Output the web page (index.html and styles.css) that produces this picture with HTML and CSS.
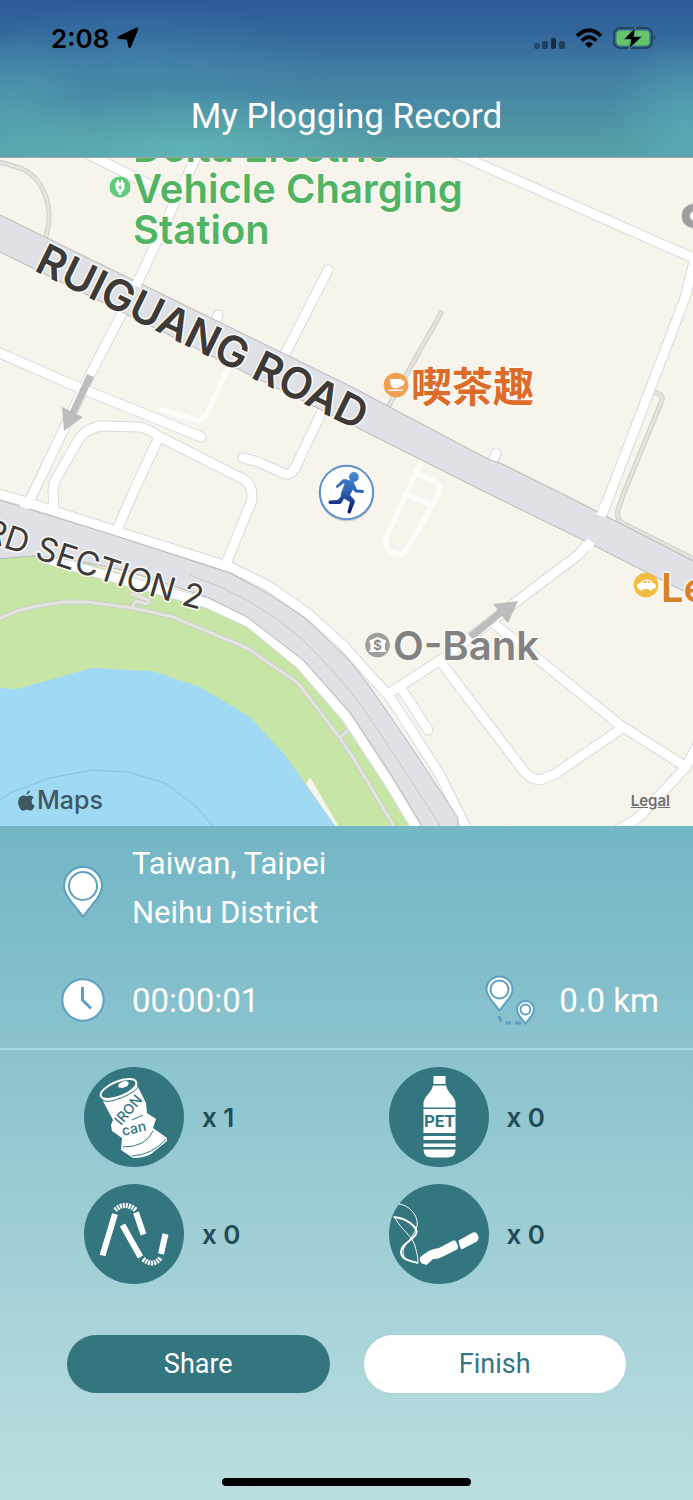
FILE: index.html
```html
<!DOCTYPE html>
<html lang="en">
<head>
  <meta charset="UTF-8">
  <meta name="viewport" content="width=device-width, initial-scale=1.0">
  <title>My Plogging Record</title>
  <link rel="stylesheet" href="styles.css">
</head>
<body>
  <header class="top">
    <div class="status-bar">
      <div class="status-left">
        <span class="time">2:08</span>
        <svg class="locate" viewBox="0 0 22 22" aria-hidden="true"><path d="M18.500 1Q22-.8 21 3L14 20Q12.500 22.500 11.300 19.500L10 13.500Q9.800 12.800 9 12.600L1.800 12Q-1 11 1.200 9.200Z"/></svg>
      </div>
      <div class="status-right">
        <svg class="signal" viewBox="0 0 31 12" aria-hidden="true">
          <rect x="0" y="6" width="6" height="6" rx="2" opacity=".3"/>
          <rect x="8" y="4" width="6" height="8" rx="2" opacity=".4"/>
          <rect x="17" y="1" width="5" height="11" rx="2" opacity=".6"/>
          <rect x="25" y="4" width="6" height="8" rx="2" opacity=".4"/>
        </svg>
        <svg class="wifi" viewBox="0 0 28 20" aria-hidden="true">
          <path d="M2 8Q14-3.500 26 8M6.700 12.700Q14 5.500 21.300 12.700" fill="none" stroke="#000" stroke-width="3.600"/>
          <path d="M9.800 16Q14 12 18.200 16L14 20Z"/>
        </svg>
        <svg class="battery" viewBox="0 0 44 22" aria-hidden="true">
          <rect x="1" y="1" width="38" height="20" rx="6" fill="none" stroke="#24465f" stroke-width="2"/>
          <rect x="3.500" y="3.500" width="33" height="15" rx="4" fill="#65c466"/>
          <path d="M41 8q3 3 0 6z" fill="#24465f"/>
          <path d="M22.500 0 11 12.500h7L16 22 29 9.500h-8z" stroke="#4f8d85" stroke-width="1"/>
        </svg>
      </div>
    </div>
    <h1>My Plogging Record</h1>
  </header>

  <main>
    <section class="map-box" aria-label="Map">
      <svg class="map" viewBox="0 158 693 668">
        <defs>
          <g id="streets">
            <path d="M90 155 160 190"/>
            <path d="M197 155 137 284 90 375 24 512"/>
            <path d="M-5 351 80 388 147 415 201 437"/>
            <path d="M54 510 53 492Q53 485 56 479L79 439Q86 429 100 426L140 427Q151 430 160 437L245 480Q252 485 252 497 252 503 247 512L225 566"/>
            <path d="M159 437 132 495 115 535"/>
            <path d="M328 270 280 364"/>
            <path d="M218 315 213 328"/>
            <path d="M325 405 297 464Q293 475 285 474L258 462 243 458"/>
            <path d="M455 153 573 205 700 261"/>
            <path d="M695 258 685 298 600 520"/>
            <path d="M592 533Q587 547 578 555L516 602 442 659 388 694"/>
            <path d="M492 622 620 725 686 767 700 740"/>
            <path d="M686 767 643 813Q636 821 615 831"/>
            <path d="M440 661 523 770Q529 779 540 780L555 774 621 729"/>
            <path d="M401 688 428 730"/>
            <path d="M496 453 491 466"/>
            <path d="M-5 493 20 500 113 530 230 567 267 585 310 615 343 645 368 673 390 697 440 775 468 831"/>
          </g>
          <g id="paths">
            <path d="M-4 161 20 168Q45 178 49 212 50 222 45 240"/>
            <path d="M441 313 387 409"/>
            <path d="M652 391 659 394Q664 397 661 403L623 495 618 510Q616 520 624 524L700 562"/>
          </g>
          <g id="park-paths">
            <path d="M-4 620 17 611 37 606 63 602 87 602 133 608 173 617 247 648 298 683 340 738 354 759 398 833M340 738 350 728"/>
            <path d="M133 608Q133 600 140 602L146 604Q152 601 146 599L132 594"/>
          </g>
        </defs>

        <rect class="land" y="158" width="693" height="668"/>
        <path class="alley" d="M228 368 207 414Q203 421 196 420L162 410M421 462 386 538Q384 549 393 553 403 558 409 546L436 498Q444 486 434 481L418 474M408 495 431 505"/>
        <use href="#paths" class="path-edge"/>
        <use href="#paths" class="path"/>
        <use href="#streets" class="street-edge"/>
        <use href="#streets" class="street"/>

        <!-- river side -->
        <path class="park" d="M0 555 60 555 127 575 207 603 250 623 300 662 347 717 416 827 0 827Z"/>
        <path class="water" d="M0 688 17 689 92 668 152 671 200 687 250 717 285 755 336 827 0 827Z"/>
        <path class="water-line" d="M0 800 10 793 50 778 92 770 128 772 165 783 197 807 214 828"/>
        <path class="land" d="M310 777 306 784 336 827 339 827Z"/>
        <use href="#park-paths" class="path-edge"/>
        <use href="#park-paths" class="path"/>
        <path class="street-edge" d="M50 560 127 581 207 603 250 623 300 664 347 718 390 784 420 834"/>
        <path class="street" d="M50 560 127 581 207 603 250 623 300 664 347 718 390 784 420 834"/>

        <!-- main roads -->
        <path class="road" d="M-4 499 113 535 230 573 267 593 305 618 350 661 370 687 410 745 458 818 458 832 426 832 390 773 350 712 303 660 247 617 207 597 127 571 67 559 33 556 -4 559Z"/>
        <path class="lane" d="M190 575Q250 595 300 637 350 685 380 733L443 830"/>
        <path class="road" d="M-4 213 350 386 490 460 500 463 565 495 697 563 697 598 583 540 481 490 356 427 -4 250Z"/>
        <path class="street-end" d="M605 505 601 516M586 549 591 541M27 500 24 508M139 279 136 286"/>

        <!-- one way arrows -->
        <g class="arrow">
          <path d="M87 374 94 377 76 414 83 417 64 431 62 407 70 411Z"/>
          <path d="M468 634 498 610 493 604 518 601 508 623 502 616 473 640Z"/>
        </g>

        <text class="road-name" transform="translate(33 270) rotate(26.300)">RUIGUANG ROAD</text>
        <path id="section-line" d="M-18 540Q60 567 117 585 165 602 240 619" fill="none"/>
        <text class="street-name"><textPath href="#section-line">RD SECTION 2</textPath></text>

        <!-- places -->
        <g class="place charge">
          <circle cx="120" cy="187" r="10.500"/>
          <path class="glyph" d="M117 180h2v2.500h2V180h2v2.500h1.500V188Q124 191 121.500 192V195H118.500V192Q116 191 115.500 188V182.500H117Z"/>
          <path d="M121 184 118 188H120L119.500 191 122 187H120.500Z"/>
          <text x="133" y="162">Delta Electric</text>
          <text x="133" y="203">Vehicle Charging</text>
          <text x="133" y="244">Station</text>
        </g>
        <g class="place tea">
          <circle cx="396" cy="385" r="12.300"/>
          <path class="glyph" d="M390 379H401.500V380.500H403.500Q405 381 404.500 383 403.500 386 400 386.500L398 388H393Q390 386 390 379ZM388.500 389.500H403V391H388.500Z"/>
          <text lang="zh-Hant" x="411" y="402">喫茶趣</text>
        </g>
        <g class="place bank">
          <circle cx="377.500" cy="645" r="12.300"/>
          <path class="glyph" d="M369.500 640.500 377.500 637 386 640.500V643H385V650H386V652H369.500V650H370.500V643H369.500Z"/>
          <text class="dollar" x="377.500" y="649.500">$</text>
          <text x="393" y="660">O-Bank</text>
        </g>
        <g class="place car">
          <circle cx="646" cy="585" r="12.300"/>
          <path class="glyph" d="M637 586Q637 583 641 582.500 643 579.500 647 579.500 651 579.500 653 583 656 583.500 656 587 655 589 653 588.500A2.300 2.300 0 0 1 648.500 589H643.500A2.300 2.300 0 0 1 639 588.500Q637 589 637 586Z"/>
          <path d="M642.500 583 644 581H646.500V583ZM647.500 581 650 581.500 651 583H647.500Z"/>
          <text x="661" y="602">Le</text>
        </g>
        <g class="place gray-dot">
          <circle cx="694" cy="216" r="12.300"/>
          <circle class="glyph" cx="695" cy="216" r="5"/>
        </g>

        <!-- runner -->
        <linearGradient id="runner-blue" x1="0" y1="0" x2="0" y2="1"><stop offset="0" stop-color="#4a8cd2"/><stop offset=".5" stop-color="#2c5fae"/><stop offset="1" stop-color="#050b6e"/></linearGradient>
        <circle class="runner-shadow" cx="346.500" cy="494" r="27.500"/>
        <circle class="runner-ring" cx="346.500" cy="492.500" r="26.700"/>
        <path fill="url(#runner-blue)" d="M349 477a4.900 4.900 0 1 1 9.800 0 4.900 4.900 0 1 1-9.800 0M336 486 342 480Q343 479 345 479L352 481Q354 482 354.500 484L357 489.500 363 490Q365 491.500 363 493L356 492.500Q355 492.500 354 491L353 489.500 350 495 353.500 499Q355.500 500.500 354.500 503L350.500 513Q348.500 514.500 347.500 512L350 502 344 498.500 341.500 503Q341 504 339 504H329.500Q327.500 502 329.500 500.500L337.500 500 341 496.500Q340.500 495 341.500 492L344.500 484 343.500 483.500 338 487.500Q335.500 488.500 336 486Z"/>
      </svg>
      <div class="map-brand">
        <svg viewBox="0 0 17 21" aria-hidden="true"><path d="M11.800.2Q12 3.500 8.700 5 8.200 1.800 11.800.2M8.600 6.300Q12.500 4.300 15.800 7.300 12.500 10 14.200 13.500 15 15 16.700 15.700 14.500 21 12 20.500 8.500 19.200 5.800 20.500C3 21.500 0 16 .2 11.800.5 6.500 4.500 4.300 8.600 6.300"/></svg>
        <span>Maps</span>
      </div>
      <a class="legal" href="#">Legal</a>
    </section>

    <section class="record">
      <div class="info">
        <div class="info-row">
          <svg class="pin" viewBox="0 0 40 52" aria-hidden="true">
            <path d="M20 1A19 19 0 0 0 1 20Q1 26 7 34L20 50.500 33 34Q39 26 39 20A19 19 0 0 0 20 1Z"/>
            <circle cx="20" cy="20" r="14"/>
          </svg>
          <p class="place-name">Taiwan, Taipei<br>Neihu District</p>
        </div>
        <div class="info-row">
          <svg class="clock" viewBox="0 0 44 44" aria-hidden="true">
            <circle cx="22" cy="22" r="20.700"/>
            <path d="M21.500 9V22L30 30.500"/>
          </svg>
          <p>00:00:01</p>
          <div class="distance">
            <svg class="route" viewBox="0 0 50 50" aria-hidden="true">
              <path d="M14.500 1.500A13 13 0 0 0 1.500 14.500Q1.500 18 5.500 24L14.500 35.500 23.500 24Q27.500 18 27.500 14.500A13 13 0 0 0 14.500 1.500Z"/>
              <circle cx="14.500" cy="14.500" r="9"/>
              <path d="M40.500 26A8.500 8.500 0 0 0 32 34.500Q32 37 34.500 41L40.500 48.500 46.500 41Q49 37 49 34.500A8.500 8.500 0 0 0 40.500 26Z"/>
              <circle cx="40.500" cy="34.500" r="5"/>
              <path class="dots" d="M14.500 41Q14.500 45 16.500 46M20.500 48H26M30 48H36"/>
            </svg>
            <p>0.0 km</p>
          </div>
        </div>
      </div>

      <ul class="trash">
        <li>
          <svg viewBox="0 0 100 100" role="img" aria-label="Iron can">
            <circle class="disc" cx="50" cy="50" r="50"/>
            <path class="fill" d="M17 30 20 36 29 53 27 58 28 64 38 71 37 83 49 91Q60 91 67 87L83 74 83 71 69 61 72 52 63 46 62 36 53 18Z"/>
            <ellipse class="lid" cx="34.500" cy="22" rx="19" ry="7.500" transform="rotate(-22 34.500 22)"/>
            <path class="cut" d="M17 31Q19 38 37 31 54 24 55 18"/>
            <ellipse class="fill" cx="39.500" cy="17.500" rx="5.500" ry="3" transform="rotate(-20 39.500 17.500)"/>
            <path class="cut" d="M39 80Q62 80 69 64M48 89Q68 88 82 72M48 53 59 48"/>
            <text class="can-text" transform="translate(37 59) rotate(-50)">IRON</text>
            <text class="can-text" transform="translate(39 69) rotate(-13)">can</text>
          </svg>
          <span>x 1</span>
        </li>
        <li>
          <svg viewBox="0 0 100 100" role="img" aria-label="PET bottle">
            <circle class="disc" cx="50" cy="50" r="50"/>
            <path class="fill" d="M44.500 9H56.500V17H44.500ZM44 18.500H57Q58 23 63 28.500 66.500 33 66.500 36V40.500H34.500V36Q34.500 33 38 28.500 43 23 44 18.500ZM34.500 42H66.500V66H34.500ZM34.500 69H66.500V73H34.500ZM34.500 76.500H66.500V80H34.500ZM34.500 82.500H66.500Q66.500 90.500 58 90.500H43Q34.500 90.500 34.500 82.500Z"/>
            <text class="pet-text" x="50.500" y="60">PET</text>
          </svg>
          <span>x 0</span>
        </li>
        <li>
          <svg viewBox="0 0 100 100" role="img" aria-label="Straws">
            <circle class="disc" cx="50" cy="50" r="50"/>
            <path class="straw" d="M18.500 71.500 31 30M52 28.500 59.500 50.500M38.500 41 56.500 73M77 70 81.500 50"/>
            <path class="bend" d="M31 26Q41 17 52 26M59 75Q70 84 77 73"/>
          </svg>
          <span>x 0</span>
        </li>
        <li>
          <svg viewBox="0 0 100 100" role="img" aria-label="Cigarette butt">
            <circle class="disc" cx="50" cy="50" r="50"/>
            <path class="smoke thick" d="M4.500 33C18 34 30 44 27 50S12 60 12 68 22 77 29 79"/>
            <path class="smoke" d="M10 20C20 21 30 32 28 42S14 60 14 68 20 76 29 79M6 34C14 48 22 50 26 62 28 70 29 74 29 79"/>
            <path class="fill" d="M31 73.500Q32 72 39 67.500 41 66 45 65L50 64 64 56.500Q66 56 67 57.500L69 62Q69.500 64 68 65.500L52 73.500Q49 75 44 75 41 78 38 80.500 36 81 33 79.500 30 77 31 73.500ZM69.500 56.500 84 48.500Q87 47.500 88.500 50.500L89.500 53Q90 55.500 88 57.500L72.500 65.500Q70 62 69.500 56.500Z"/>
          </svg>
          <span>x 0</span>
        </li>
      </ul>

      <div class="buttons">
        <button type="button" class="share">Share</button>
        <button type="button" class="finish">Finish</button>
      </div>
      <div class="home-bar"></div>
    </section>
  </main>
</body>
</html>
```

FILE: styles.css
```css
* {
  box-sizing: border-box;
}

body {
  font-family: Inter, "Noto Sans CJK TC", sans-serif;
  margin: 0;
  min-height: 100vh;
  display: flex;
  flex-direction: column;
}

p {
  margin: 0;
}

main {
  flex: 1;
  display: flex;
  flex-direction: column;
}

/* Header */
.top {
  height: 158px;
  border-bottom: 1px solid #a5a0a6;
  color: white;
  background:
    radial-gradient(ellipse 210px 70px at 27% 100%, rgba(99, 188, 188, 0.7), transparent),
    radial-gradient(ellipse 80px 90px at 2% 78%, rgba(90, 175, 185, 0.5), transparent),
    radial-gradient(ellipse 80px 90px at 99% 80%, rgba(90, 178, 190, 0.6), transparent),
    radial-gradient(ellipse 190px 70px at 20% 45%, rgba(74, 150, 180, 0.35), transparent),
    linear-gradient(#2d5b99 0%, #32669b 20%, #417ca2 45%, #4889a5 65%, #539ba4 90%, #54a0a8 100%);
}

.status-bar {
  display: flex;
  justify-content: space-between;
  align-items: center;
  height: 76px;
  padding: 0 36px 0 51px;
  color: black;
}

.status-left,
.status-right {
  display: flex;
  align-items: center;
  gap: 10px;
}

.status-left {
  gap: 8px;
}

.time {
  font-size: 26px;
  font-weight: 600;
}

.locate {
  width: 22px;
  height: 22px;
}

.signal {
  width: 31px;
  height: 12px;
  margin-top: 10px;
}

.wifi {
  width: 28px;
  height: 20px;
}

.battery {
  width: 44px;
  height: 22px;
}

h1 {
  margin: 0;
  font-family: Roboto, sans-serif;
  font-size: 35px;
  font-weight: 400;
  line-height: 82px;
  text-align: center;
}

/* Map */
.map-box {
  position: relative;
  overflow: hidden;
}

.map {
  display: block;
  width: 100%;
}

.land {
  fill: #f7f4eb;
}

.park {
  fill: #c7e6a5;
}

.water {
  fill: #9fd9f3;
}

.water-line {
  fill: none;
  stroke: #88bfea;
}

.street,
.street-edge,
.path,
.path-edge,
.alley {
  fill: none;
  stroke-linecap: round;
  stroke-linejoin: round;
}

.street,
.street-end {
  stroke: #fff;
  stroke-width: 9;
}

.street-edge {
  stroke: #d9dadc;
  stroke-width: 11;
}

.path {
  stroke: #e3e4df;
  stroke-width: 3;
}

.path-edge {
  stroke: #cdcec8;
  stroke-width: 5;
}

.alley {
  stroke: #fdfdfb;
  stroke-width: 5;
}

.road {
  fill: #e0e1e6;
  stroke: #b6b7ba;
}

.lane {
  fill: none;
  stroke: #c6c7ca;
}

.arrow {
  fill: #bdbdbd;
}

.map text {
  paint-order: stroke;
  stroke: #fbfaf6;
  stroke-width: 3px;
  stroke-linejoin: round;
}

.road-name {
  font-size: 43px;
  font-weight: 600;
  fill: #3d3a38;
}

.street-name {
  font-size: 33px;
  fill: #3d3a38;
}

.place text {
  font-size: 40px;
  font-weight: 600;
}

.place .glyph {
  fill: #fff;
}

.charge {
  fill: #5dcd7b;
}

.charge text {
  fill: #51b462;
}

.tea {
  fill: #f2a04f;
}

.tea text {
  font-family: "Noto Sans CJK TC", sans-serif;
  font-size: 41px;
  font-weight: 700;
  fill: #dd6b2a;
}

.bank {
  fill: #a09f9e;
}

.bank text {
  fill: #828283;
}

.place .dollar {
  font-size: 13px;
  text-anchor: middle;
  stroke: none;
}

.car {
  fill: #f4bb40;
}

.car text {
  fill: #d7822b;
}

.gray-dot {
  fill: #a09f9e;
}

.runner-shadow {
  fill: rgba(90, 80, 60, 0.2);
}

.runner-ring {
  fill: #fff;
  stroke: #5b8fd0;
  stroke-width: 2;
}

.map-brand {
  position: absolute;
  left: 18px;
  bottom: 11px;
  display: flex;
  align-items: center;
  gap: 2px;
  font-size: 25px;
  font-weight: 500;
  color: #3f5663;
}

.map-brand svg {
  width: 17px;
  height: 21px;
  fill: #3f5663;
}

.legal {
  position: absolute;
  right: 23px;
  bottom: 16px;
  font-size: 15px;
  font-weight: 600;
  color: #6f6f6f;
}

/* Record */
.record {
  flex: 1;
  display: flex;
  flex-direction: column;
  background: linear-gradient(#73b6c5, #8ac3ce 33%, #a8d3d9 73%, #bbdfe0);
}

.info {
  padding: 13px 34px 23px 61px;
  border-bottom: 2px solid #a5d9e7;
  font-family: Roboto, sans-serif;
  font-size: 33px;
  line-height: 49px;
  color: white;
}

.info-row {
  display: flex;
  align-items: center;
  gap: 27px;
}

.info-row + .info-row {
  margin-top: 38px;
}

.place-name {
  font-size: 31px;
}

.pin,
.clock,
.route {
  fill: #fff;
  stroke: #5b9fc1;
  stroke-width: 2;
}

.pin {
  width: 44px;
  height: 52px;
  margin-top: 8px;
}

.clock {
  width: 44px;
  height: 44px;
}

.clock path,
.route .dots {
  fill: none;
  stroke-width: 3;
}

.distance {
  display: flex;
  align-items: center;
  gap: 24px;
  margin-left: auto;
}

.route {
  width: 50px;
  height: 50px;
}

/* Trash counters */
.trash {
  display: grid;
  grid-template-columns: 1fr 1fr;
  row-gap: 17px;
  list-style: none;
  margin: 0;
  padding: 17px 0 0 84px;
}

.trash li {
  display: flex;
  align-items: center;
  gap: 18px;
  font-size: 26px;
  font-weight: 600;
  color: #224c56;
}

.trash svg {
  width: 100px;
  height: 100px;
}

.disc {
  fill: #347680;
}

.fill {
  fill: #fff;
}

.lid {
  fill: #347680;
  stroke: #fff;
  stroke-width: 2;
}

.cut {
  fill: none;
  stroke: #347680;
  stroke-width: 1;
}

.can-text {
  font-size: 14px;
  font-weight: 500;
  fill: #347680;
}

.pet-text {
  font-family: Roboto, sans-serif;
  font-size: 17px;
  font-weight: 700;
  text-anchor: middle;
  fill: #347680;
}

.straw {
  stroke: #fff;
  stroke-width: 6;
}

.bend {
  fill: none;
  stroke: #fff;
  stroke-width: 5;
  stroke-dasharray: 2 1;
}

.smoke {
  fill: none;
  stroke: #fff;
  stroke-width: 1;
}

.smoke.thick {
  stroke-width: 2;
}

/* Buttons */
.buttons {
  display: flex;
  gap: 34px;
  padding: 51px 67px;
}

.buttons button {
  flex: 1;
  height: 58px;
  border: none;
  border-radius: 29px;
  font-family: Roboto, sans-serif;
  font-size: 27px;
  cursor: pointer;
}

.share {
  background: #347680;
  color: white;
}

.finish {
  background: white;
  color: #347680;
}

.home-bar {
  width: 36%;
  height: 8px;
  margin: auto auto 14px;
  border-radius: 4px;
  background: black;
}
```
